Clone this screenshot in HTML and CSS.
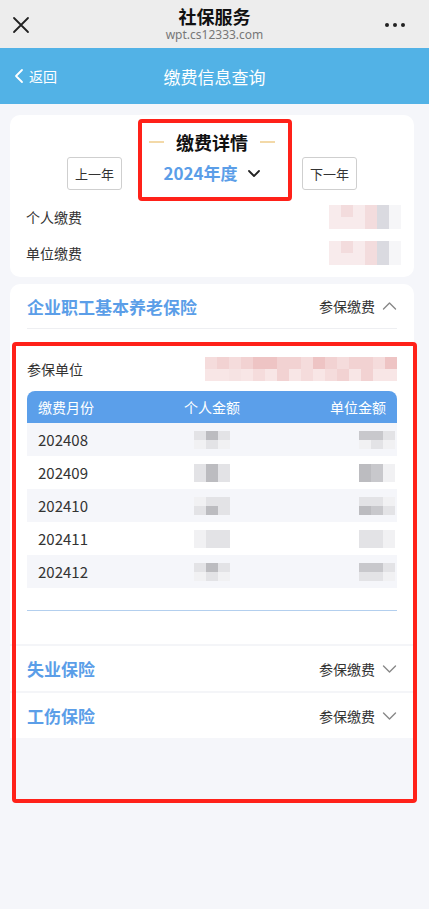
FILE: index.html
```html
<!DOCTYPE html>
<html lang="zh-CN">
<head>
<meta charset="utf-8">
<title>社保服务</title>
<link rel="stylesheet" href="styles.css">
</head>
<body>
<div class="topbar">
  <div class="tb-left">
    <svg width="18" height="18" viewBox="0 0 18 18"><path d="M2 2L16 16M16 2L2 16" stroke="#222" stroke-width="1.8" fill="none" stroke-linecap="round"/></svg>
  </div>
  <div class="tb-center">
    <div class="tb-title">社保服务</div>
    <div class="tb-url">wpt.cs12333.com</div>
  </div>
  <div class="tb-right">
    <span class="dot"></span><span class="dot"></span><span class="dot"></span>
  </div>
</div>
<div class="header">
  <div class="back">
    <svg width="10" height="16" viewBox="0 0 10 16"><path d="M8 2L2 8L8 14" stroke="#fff" stroke-width="1.8" fill="none" stroke-linecap="round" stroke-linejoin="round"/></svg>
    <span>返回</span>
  </div>
  <div class="header-title">缴费信息查询</div>
</div>

<div class="page">
  <div class="card summary">
    <div class="year-row">
      <button class="year-btn">上一年</button>
      <div class="year-center">
        <div class="detail-title"><span class="deco"></span><span>缴费详情</span><span class="deco"></span></div>
        <div class="year-sel">2024年度
          <svg width="14" height="10" viewBox="0 0 14 10"><path d="M2 2L7 7L12 2" stroke="#222" stroke-width="1.8" fill="none" stroke-linecap="round" stroke-linejoin="round"/></svg>
        </div>
        <div class="redbox rb1"></div>
      </div>
      <button class="year-btn">下一年</button>
    </div>
    <div class="sum-row">
      <span>个人缴费</span>
      <span class="mosaic two">
        <i class="p1"></i><i class="p2"></i><i class="p1"></i><i class="p2"></i><i class="g2"></i><i class="w1"></i>
        <i class="p1"></i><i class="p1"></i><i class="p1"></i><i class="p2"></i><i class="g2"></i><i class="w1"></i>
      </span>
    </div>
    <div class="sum-row">
      <span>单位缴费</span>
      <span class="mosaic two">
        <i class="p1"></i><i class="p2"></i><i class="p1"></i><i class="p2"></i><i class="g2"></i><i class="w1"></i>
        <i class="p1"></i><i class="p1"></i><i class="p1"></i><i class="p2"></i><i class="g2"></i><i class="w1"></i>
      </span>
    </div>
  </div>

  <div class="card insure">
    <div class="ins-head">
      <span class="ins-title">企业职工基本养老保险</span>
      <span class="ins-right">参保缴费
        <svg width="15" height="10" viewBox="0 0 15 10"><path d="M1.5 8L7.5 2L13.5 8" stroke="#888" stroke-width="1.4" fill="none" stroke-linecap="round" stroke-linejoin="round"/></svg>
      </span>
    </div>
    <div class="ins-body">
      <div class="unit-row">
        <span>参保单位</span>
        <span class="mosaic unit">
          <i class="q1"></i><i class="q2"></i><i class="q1"></i><i class="q2"></i><i class="q3"></i><i class="q3"></i><i class="q2"></i><i class="q2"></i><i class="q1"></i><i class="q3"></i><i class="q2"></i><i class="q1"></i><i class="q2"></i><i class="q2"></i><i class="q1"></i><i class="q3"></i>
          <i class="q4"></i><i class="q4"></i><i class="q5"></i><i class="q4"></i><i class="q1"></i><i class="q4"></i><i class="q2"></i><i class="q4"></i><i class="q1"></i><i class="q4"></i><i class="q1"></i><i class="q2"></i><i class="q4"></i><i class="q2"></i><i class="q4"></i><i class="q4"></i>
        </span>
      </div>
      <div class="table">
        <div class="thead">
          <span class="c1">缴费月份</span><span class="c2">个人金额</span><span class="c3">单位金额</span>
        </div>
        <div class="trow alt"><span class="c1">202408</span><span class="c2"><span class="mosaic cell"><i class="k1"></i><i class="k3"></i><i class="k1"></i><i class="w2"></i><i class="k1"></i><i class="w2"></i></span></span><span class="c3"><span class="mosaic cell"><i class="k2"></i><i class="k2"></i><i class="k1"></i><i class="w2"></i><i class="k1"></i><i class="w2"></i></span></span></div>
        <div class="trow"><span class="c1">202409</span><span class="c2"><span class="mosaic cell"><i class="k1"></i><i class="k3"></i><i class="k1"></i><i class="k1"></i><i class="k3"></i><i class="k1"></i></span></span><span class="c3"><span class="mosaic cell"><i class="k3"></i><i class="k2"></i><i class="w2"></i><i class="k3"></i><i class="k2"></i><i class="w2"></i></span></span></div>
        <div class="trow alt"><span class="c1">202410</span><span class="c2"><span class="mosaic cell"><i class="w2"></i><i class="k1"></i><i class="k1"></i><i class="k1"></i><i class="k3"></i><i class="k1"></i></span></span><span class="c3"><span class="mosaic cell"><i class="k1"></i><i class="k1"></i><i class="w2"></i><i class="k3"></i><i class="k2"></i><i class="k1"></i></span></span></div>
        <div class="trow"><span class="c1">202411</span><span class="c2"><span class="mosaic cell"><i class="w2"></i><i class="k1"></i><i class="k1"></i><i class="w2"></i><i class="k1"></i><i class="k1"></i></span></span><span class="c3"><span class="mosaic cell"><i class="k1"></i><i class="k1"></i><i class="w2"></i><i class="k1"></i><i class="k1"></i><i class="w2"></i></span></span></div>
        <div class="trow alt"><span class="c1">202412</span><span class="c2"><span class="mosaic cell"><i class="k1"></i><i class="k3"></i><i class="k1"></i><i class="w2"></i><i class="k1"></i><i class="w2"></i></span></span><span class="c3"><span class="mosaic cell"><i class="k2"></i><i class="k2"></i><i class="k1"></i><i class="k1"></i><i class="k1"></i><i class="w2"></i></span></span></div>
      </div>
      <div class="blue-line"></div>
    </div>
    <div class="sec">
      <span class="ins-title">失业保险</span>
      <span class="ins-right">参保缴费
        <svg width="15" height="10" viewBox="0 0 15 10"><path d="M1.5 2L7.5 8L13.5 2" stroke="#888" stroke-width="1.4" fill="none" stroke-linecap="round" stroke-linejoin="round"/></svg>
      </span>
    </div>
    <div class="sec">
      <span class="ins-title">工伤保险</span>
      <span class="ins-right">参保缴费
        <svg width="15" height="10" viewBox="0 0 15 10"><path d="M1.5 2L7.5 8L13.5 2" stroke="#888" stroke-width="1.4" fill="none" stroke-linecap="round" stroke-linejoin="round"/></svg>
      </span>
    </div>
    <div class="redbox rb2"></div>
  </div>
</div>
</body>
</html>
```
FILE: styles.css
```css
* { box-sizing: border-box; }
html, body { margin: 0; padding: 0; }
body {
  width: 429px;
  min-height: 909px;
  background: #f5f6fa;
  font-family: "Noto Sans CJK SC", "Noto Sans", sans-serif;
  color: #333;
}
.topbar {
  height: 48px;
  background: #ededed;
  display: grid;
  grid-template-columns: 60px 1fr 60px;
  align-items: center;
}
.tb-left { padding-left: 12px; display: flex; align-items: center; padding-top: 2px; }
.tb-center { display: flex; flex-direction: column; align-items: center; align-self: start; padding-top: 6px; }
.tb-title { font-size: 18px; font-weight: 700; color: #111; line-height: 20px; height: 20px; }
.tb-url { font-size: 12px; color: #777; line-height: 14px; height: 14px; margin-top: 2px; font-family: "Noto Sans", sans-serif; }
.tb-right { display: flex; justify-content: flex-end; gap: 4px; padding-right: 24px; padding-top: 2px; }
.dot { width: 4px; height: 4px; border-radius: 50%; background: #222; }

.header {
  height: 56px;
  background: #52b2e6;
  display: grid;
  grid-template-columns: 80px 1fr 80px;
  align-items: center;
  color: #fff;
}
.back { display: flex; align-items: center; gap: 5px; padding-left: 14px; font-size: 14px; }
.header-title { text-align: center; font-size: 17px; }

.page { padding: 11px 15px 0 10px; }
.card { background: #fff; border-radius: 10px; position: relative; }
.summary { padding: 0 16px 6px; height: 162px; }
.year-row { display: flex; justify-content: center; align-items: flex-end; padding-top: 14px; }
.year-btn {
  width: 55px; height: 33px;
  border: 1px solid #cfcfcf; border-radius: 3px; background: #fff;
  font-family: inherit; font-size: 13px; color: #333; padding: 0;
}
.year-center { width: 180px; position: relative; padding-bottom: 4px; display: flex; flex-direction: column; align-items: center; }
.detail-title { display: flex; align-items: center; gap: 12px; font-size: 18px; font-weight: 700; color: #111; line-height: 26px; }
.deco { width: 15px; height: 2px; background: #f3d9a8; }
.year-sel { margin-top: 5px; line-height: 26px; font-size: 17px; font-weight: 700; color: #5b9ee8; display: flex; align-items: center; gap: 9px; }
.year-sel svg { margin-top: 1px; }
.redbox { position: absolute; border: 4px solid #ff2119; border-radius: 4px; pointer-events: none; }
.rb1 { left: 16px; top: -10px; width: 154px; height: 82px; }
.sum-row { display: flex; justify-content: space-between; align-items: center; height: 36px; font-size: 14px; margin-top: 9px; }
.sum-row + .sum-row { margin-top: 0; }

.mosaic { display: grid; }
.mosaic i { display: block; }
.mosaic.two { grid-template-columns: repeat(6, 12px); grid-auto-rows: 12px; margin-right: -3px; }
.p1 { background: #f8ebec; }
.p2 { background: #f3dcdd; }
.g2 { background: #dadae0; }
.w1 { background: #f6f6f8; }

.insure { margin-top: 7px; }
.ins-head { display: flex; justify-content: space-between; align-items: center; height: 45px; margin: 0 17px; border-bottom: 1px solid #eeeff2; }
.ins-title { font-size: 17px; font-weight: 700; color: #5b9ee8; }
.ins-right { display: flex; align-items: center; gap: 7px; font-size: 14px; color: #333; }
.ins-body { padding: 26px 17px 33px; }
.unit-row { display: flex; justify-content: space-between; align-items: center; height: 28px; font-size: 14px; }
.mosaic.unit { grid-template-columns: repeat(16, 12px); grid-auto-rows: 12px; margin-right: 0; }
.q1 { background: #f5dcdc; }
.q2 { background: #f2d2d2; }
.q3 { background: #eec4c4; }
.q4 { background: #f8e6e6; }
.q5 { background: #f6e3e3; }
.table { margin-top: 8px; }
.thead {
  display: grid; grid-template-columns: 1fr 1fr 1fr; align-items: center;
  height: 32px; background: #5b9fea; color: #fff; font-size: 14px;
  border-radius: 8px 8px 0 0; padding: 0 11px;
}
.trow {
  display: grid; grid-template-columns: 1fr 1fr 1fr; align-items: center;
  height: 33px; font-size: 15px; color: #333; padding: 0 11px 0 11px;
}
.trow.alt { background: #f5f6fa; }
.c1 { text-align: left; }
.c2 { text-align: center; display: flex; justify-content: center; }
.c3 { text-align: right; display: flex; justify-content: flex-end; }
.thead .c2, .thead .c3 { display: block; }
.trow .c3 { margin-right: -9px; }
.mosaic.cell { grid-template-columns: repeat(3, 12px); grid-auto-rows: 9px; }
.k1 { background: #e3e3e6; }
.k2 { background: #c8c8cc; }
.k3 { background: #bcbcc0; }
.w2 { background: #f1f1f3; }
.blue-line { height: 1px; background: #b3cfee; margin-top: 22px; }
.sec {
  display: flex; justify-content: space-between; align-items: center;
  height: 47px; padding: 0 17px; border-top: 2px solid #f4f5f8; background: #fff;
}
.rb2 { left: 2px; top: 58px; width: 405px; height: 461px; }
```
